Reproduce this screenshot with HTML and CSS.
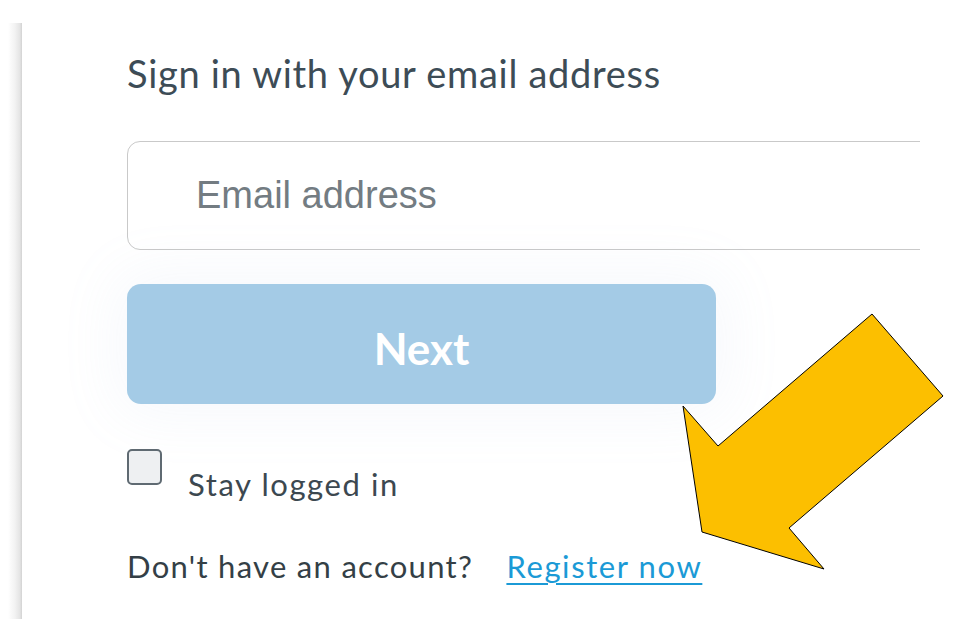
FILE: index.html
```html
<!DOCTYPE html>
<html lang="en">
<head>
<meta charset="utf-8">
<title>Sign in</title>
<link rel="stylesheet" href="styles.css">
</head>
<body>
<div class="frame">
  <div class="edge"></div>
  <main class="panel">
    <h1 class="title">Sign in with your email address</h1>
    <div class="field"><span class="placeholder">Email address</span></div>
    <button class="next" type="button">Next</button>
    <label class="stay">
      <span class="box"></span>
      <span class="stay-text">Stay logged in</span>
    </label>
    <p class="register">Don't have an account? <a href="#" class="reg-link">Register now</a></p>
  </main>
</div>
<svg class="arrow" width="961" height="629" viewBox="0 0 961 629">
  <polygon points="872,314 943,396 789,528 824,569 702,532 683,406 718,446" fill="#fcbf00" stroke="#000" stroke-width="1" stroke-linejoin="miter"/>
</svg>
</body>
</html>
```
FILE: styles.css
```css
html, body {
  margin: 0;
  padding: 0;
  background: #ffffff;
}
body {
  width: 961px;
  height: 629px;
  overflow: hidden;
  position: relative;
  font-family: Lato, "DejaVu Sans", sans-serif;
}
.frame {
  display: flex;
  margin-top: 23px;
  margin-left: 8px;
  height: 596px;
}
.edge {
  width: 14px;
  flex: none;
  background: linear-gradient(to right, #ffffff 0%, #f2f2f2 50%, #e4e4e4 85%, #d2d2d2 100%);
}
.panel {
  width: 898px;
  flex: none;
  overflow: hidden;
  background: #fff;
  padding-left: 105px;
  box-sizing: border-box;
}
.title {
  margin: 0;
  padding-top: 28px;
  font-weight: 400;
  font-size: 38px;
  line-height: 44px;
  letter-spacing: 0.7px;
  color: #3d4c56;
}
.field {
  margin-top: 46px;
  width: 900px;
  height: 109px;
  box-sizing: border-box;
  border: 1px solid #c9c9c9;
  border-radius: 13px;
  display: flex;
  align-items: center;
  padding-left: 68px;
  background: #fff;
}
.placeholder {
  font-family: "Liberation Sans", Arial, sans-serif;
  font-size: 38px;
  color: #737c82;
}
.next {
  display: block;
  margin-top: 34px;
  width: 589px;
  height: 120px;
  border: none;
  border-radius: 14px;
  background: #a4cbe6;
  color: #fff;
  font-family: Lato, "DejaVu Sans", sans-serif;
  font-weight: 700;
  font-size: 44px;
  box-shadow: 0 0 60px 10px rgba(160, 175, 220, 0.09);
  padding: 8px 0 0;
}
.stay {
  display: flex;
  align-items: flex-start;
  margin-top: 45px;
  height: 50px;
}
.box {
  width: 35px;
  height: 36px;
  box-sizing: border-box;
  border: 2px solid #5f6a72;
  border-radius: 5px;
  background: #eef0f2;
  flex: none;
}
.stay-text {
  margin-left: 26px;
  margin-top: 17px;
  font-size: 31px;
  line-height: 36px;
  letter-spacing: 1.6px;
  color: #3c4850;
}
.register {
  margin: 47px 0 0;
  font-size: 31px;
  line-height: 40px;
  letter-spacing: 1.3px;
  color: #343f46;
  white-space: nowrap;
}
.reg-link {
  margin-left: 24px;
  letter-spacing: 1.6px;
  color: #1b9ad6;
  text-decoration: underline;
  text-decoration-thickness: 2px;
  text-underline-offset: 5px;
}
.arrow {
  position: absolute;
  left: 0;
  top: 0;
  pointer-events: none;
}
```
